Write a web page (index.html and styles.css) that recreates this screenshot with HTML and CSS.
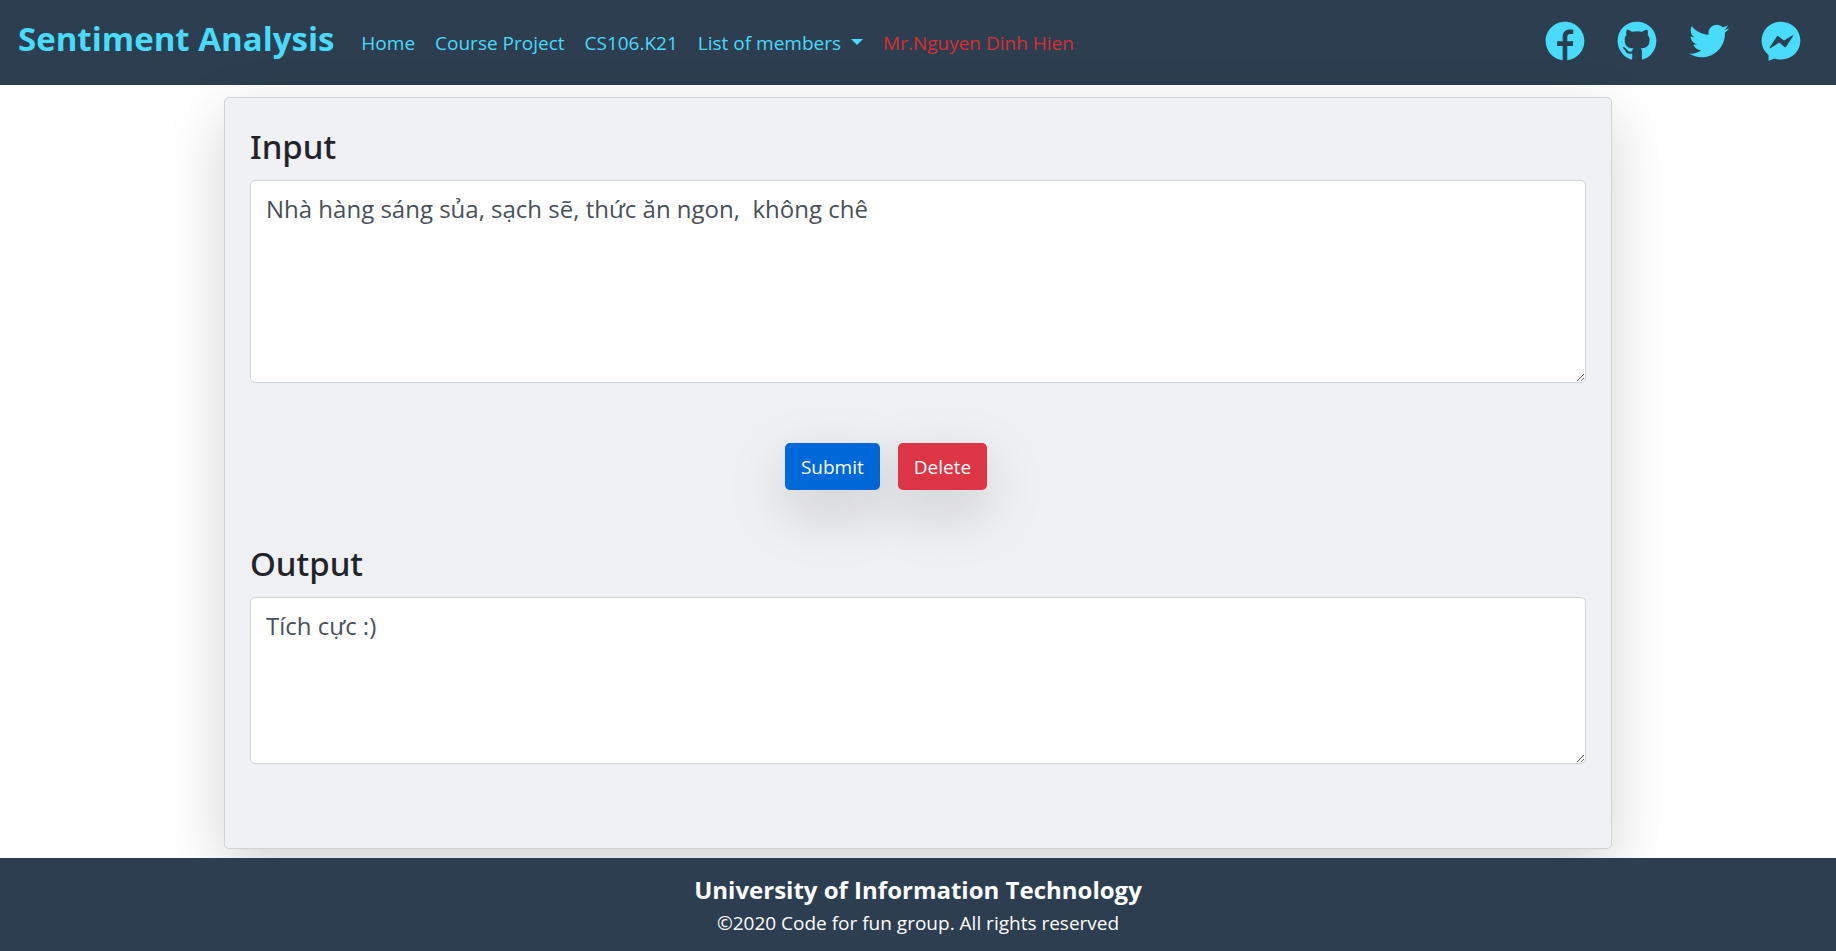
FILE: index.html
```html
<!DOCTYPE html>
<html lang="vi">
<head>
<meta charset="utf-8">
<title>Sentiment Analysis</title>
<link rel="stylesheet" href="styles.css">
</head>
<body>
<header class="navbar">
  <a class="brand" href="#">Sentiment Analysis</a>
  <nav class="nav">
    <a href="#">Home</a>
    <a href="#">Course Project</a>
    <a href="#">CS106.K21</a>
    <a class="dropdown" href="#">List of members</a>
    <a class="teacher" href="#">Mr.Nguyen Dinh Hien</a>
  </nav>
  <div class="social">
    <a href="#" aria-label="Facebook"><svg viewBox="0 0 512 512"><path d="M504 256C504 119 393 8 256 8S8 119 8 256c0 126 95 232 218 246V319h-71v-59h71v-57c0-60 36-94 92-94 16 0 30 1 43 3v53h-31c-33 0-45 15-45 42v53h76l-5 59h-71v183C409 488 504 383 504 256z"/></svg></a>
    <a href="#" aria-label="GitHub"><svg viewBox="-8 0 512 512"><path d="M165.900 397.400c0 2-2.300 3.600-5.200 3.600-3.300.3-5.600-1.300-5.600-3.600 0-2 2.300-3.600 5.200-3.600 3-.3 5.600 1.300 5.600 3.600zm-31.100-4.500c-.7 2 1.300 4.300 4.300 4.900 2.600 1 5.600 0 6.200-2s-1.300-4.300-4.300-5.200c-2.600-.7-5.500.3-6.200 2.300zm44.200-1.700c-2.900.7-4.900 2.600-4.600 4.900.3 2 2.900 3.300 5.900 2.600 2.900-.7 4.900-2.600 4.600-4.600-.3-1.900-3-3.200-5.900-2.900zM244.800 8C106.100 8 0 113.300 0 252c0 110.900 69.800 205.800 169.500 239.200 12.800 2.300 17.300-5.600 17.300-12.100 0-6.200-.3-40.400-.3-61.400 0 0-70 15-84.700-29.800 0 0-11.400-29.100-27.800-36.600 0 0-22.900-15.700 1.600-15.400 0 0 24.900 2 38.600 25.800 21.900 38.600 58.600 27.500 72.900 20.900 2.300-16 8.800-27.100 16-33.700-55.900-6.200-112.300-14.300-112.300-110.500 0-27.500 7.600-41.300 23.600-58.900-2.600-6.500-11.100-33.300 2.600-67.900 20.900-6.500 69 27 69 27 20-5.600 41.500-8.500 62.800-8.500s42.800 2.900 62.800 8.500c0 0 48.100-33.600 69-27 13.700 34.700 5.200 61.400 2.600 67.900 16 17.700 25.800 31.500 25.800 58.900 0 96.500-58.900 104.200-114.800 110.500 9.200 7.900 17 22.900 17 46.400 0 33.700-.3 75.400-.3 83.600 0 6.500 4.600 14.400 17.300 12.100C428.200 457.800 496 362.900 496 252 496 113.300 383.500 8 244.800 8z"/></svg></a>
    <a href="#" aria-label="Twitter"><svg viewBox="0 0 512 512"><path d="M459.370 151.716c.325 4.548.325 9.097.325 13.645 0 138.720-105.583 298.558-298.558 298.558-59.452 0-114.680-17.219-161.137-47.106 8.447.974 16.568 1.299 25.340 1.299 49.055 0 94.213-16.568 130.274-44.832-46.132-.975-84.792-31.188-98.112-72.772 6.498.974 12.995 1.624 19.818 1.624 9.421 0 18.843-1.300 27.614-3.573-48.081-9.747-84.143-51.980-84.143-102.985v-1.299c13.969 7.797 30.214 12.670 47.431 13.319-28.264-18.843-46.781-51.005-46.781-87.391 0-19.492 5.197-37.360 14.294-52.954 51.655 63.675 129.300 105.258 216.365 109.807-1.624-7.797-2.599-15.918-2.599-24.040 0-57.828 46.782-104.934 104.934-104.934 30.213 0 57.502 12.670 76.670 33.137 23.715-4.548 46.456-13.320 66.599-25.340-7.798 24.366-24.366 44.833-46.132 57.827 21.117-2.273 41.584-8.122 60.426-16.243-14.292 20.791-32.161 39.308-52.628 54.253z"/></svg></a>
    <a href="#" aria-label="Messenger"><svg viewBox="0 0 512 512"><path fill-rule="evenodd" d="M256 8C116 8 8 114 8 250c0 77 34 142 89 184v74l76-28c26 8 53 12 83 12 140 0 248-106 248-242S396 8 256 8zM110 340l92-142c5-7 13-8 20-3l63 49c5 4 11 4 17 1l101-62c8-4 13 2 8 9l-91 138c-5 7-14 9-21 3l-58-50c-5-4-12-5-18-1l-103 66c-8 4-14 0-10-8z"/></svg></a>
  </div>
</header>
<main class="container">
  <form class="card">
    <label class="title" for="input">Input</label>
    <textarea class="box" id="input" rows="5">Nhà hàng sáng sủa, sạch sẽ, thức ăn ngon,  không chê</textarea>
    <div class="actions">
      <button class="btn submit" type="button">Submit</button>
      <button class="btn delete" type="button">Delete</button>
    </div>
    <label class="title" for="output">Output</label>
    <textarea class="box" id="output" rows="4">Tích cực :)</textarea>
  </form>
</main>
<footer class="footer">
  <strong>University of Information Technology</strong>
  <span>©2020 Code for fun group. All rights reserved</span>
</footer>
</body>
</html>
```
FILE: styles.css
```css
* { box-sizing: border-box; }

body {
  margin: 0;
  min-height: 100vh;
  display: flex;
  flex-direction: column;
  background: #fff;
  color: #212529;
  font: 19px/30px "Open Sans", "Noto Sans", sans-serif;
}

a { text-decoration: none; color: #48dbfb; }

.navbar {
  display: flex;
  align-items: center;
  padding: 10px 35px 10px 18px;
  min-height: 85px;
  background: #2d3e50;
}

.brand {
  margin-right: 17px;
  padding-bottom: 8px;
  font-size: 33px;
  font-weight: 700;
  line-height: 50px;
}

.nav { display: flex; }
.nav a { padding: 0 10px; }
.nav .teacher { color: #d63031; }

.dropdown::after {
  content: "";
  display: inline-block;
  margin-left: 10px;
  vertical-align: 5px;
  border: 6px solid transparent;
  border-top-color: currentColor;
  border-bottom: 0;
}

.social {
  display: flex;
  gap: 32px;
  margin-left: auto;
}

.social svg {
  display: block;
  width: 40px;
  height: 40px;
  margin-bottom: 4px;
  fill: #48dbfb;
}

.container {
  flex: 1;
  display: flex;
  width: 100%;
  max-width: 1388px;
  margin: 0 auto;
  padding: 12px 0 9px;
}

.card {
  flex: 1;
  padding: 25px;
  border: 1px solid #d0d3d6;
  border-radius: 5px;
  background: #f0f1f5;
  box-shadow: 0 20px 60px rgba(0, 0, 0, .175);
}

.title {
  display: block;
  margin-bottom: 10px;
  font-family: "Noto Sans", "Open Sans", sans-serif;
  font-size: 33px;
  font-weight: 500;
  line-height: 47px;
}

.box {
  display: block;
  width: 100%;
  padding: 10px 15px 11px;
  border: 1px solid #ced4da;
  border-radius: 5px;
  background: #fff;
  color: #495057;
  font: 400 24px/36px "Open Sans", "Noto Sans", sans-serif;
  resize: vertical;
}

.actions {
  display: flex;
  justify-content: center;
  gap: 18px;
  margin: 60px 64px 50px 0;
}

.btn {
  padding: 9px 16px 7px;
  border: 0;
  border-radius: 5px;
  color: #fff;
  font: 19px/31px "Open Sans", "Noto Sans", sans-serif;
  box-shadow: 0 20px 60px rgba(0, 0, 0, .175);
}

.submit { background: #0069d9; }
.delete { background: #dc3545; }

.footer {
  position: relative;
  display: flex;
  flex-direction: column;
  align-items: center;
  padding: 14px 0 13px;
  background: #2d3e50;
  color: #fff;
}

.footer strong { font-size: 24px; line-height: 36px; }
```
